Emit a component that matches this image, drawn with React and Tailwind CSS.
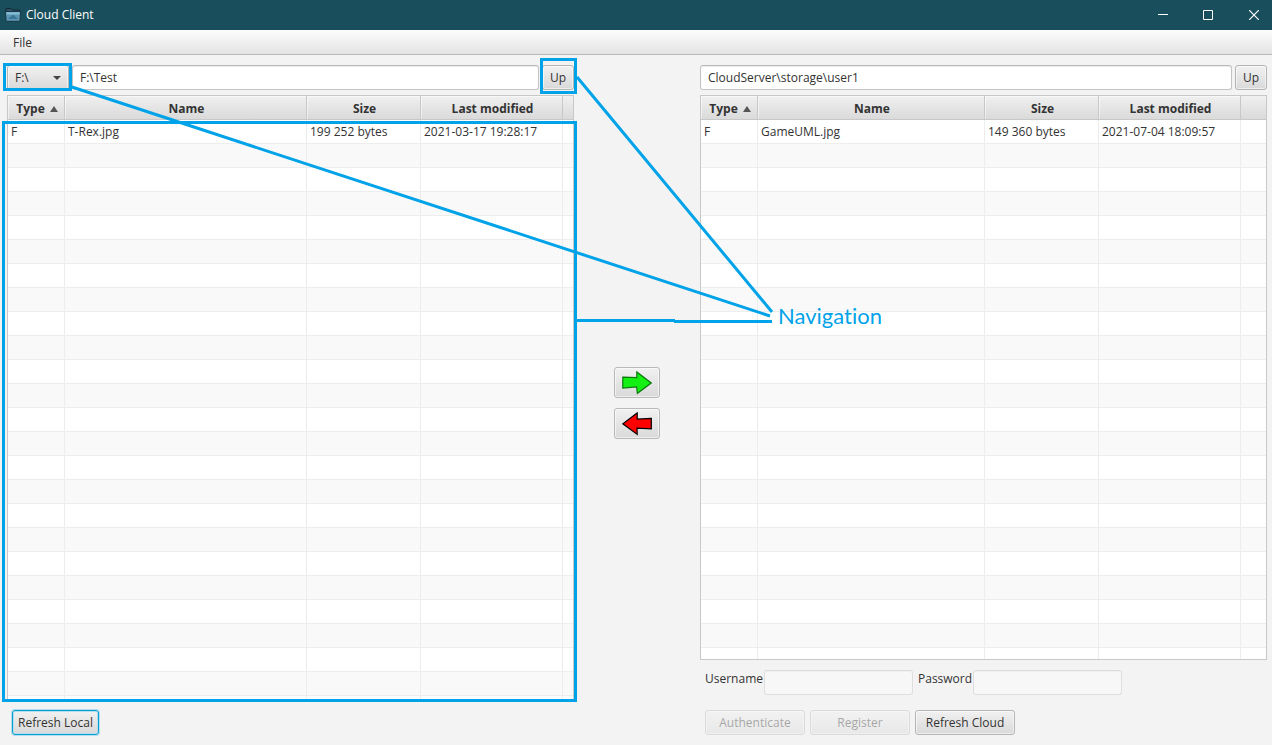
import React from "react";

const buttonBase =
  "h-[25px] shrink-0 rounded-[3px] border bg-linear-to-b from-[#f1f1f1] to-[#d9d9d9] text-center leading-4 shadow-[inset_0_0_0_1px_rgba(255,255,255,0.55)]";
const normalButton = "border-[#b5b5b5] text-[#333333]";
const disabledButton = "border-[#b5b5b5] text-[#333333] opacity-40";
const fieldBase =
  "h-[25px] min-w-0 rounded-[3px] border border-[#c3c3c3] border-t-[#b9b9b9] bg-white px-[7px] leading-4 text-[#333333] shadow-[inset_0_1px_1px_rgba(0,0,0,0.08)] outline-none";

const EMPTY_ROWS = Array.from({ length: 60 }, (_, i) => i);

function FileTable({ label, file, fillerClass }) {
  const head =
    "h-6 border-r border-b border-[#c8c8c8] bg-linear-to-b from-[#f0f0f0] to-[#dadada] pt-[2px] pr-0 pb-0 pl-[2px] text-center font-bold leading-4 shadow-[inset_1px_1px_0_rgba(255,255,255,0.5)]";
  const cell = "h-6 border-r border-b border-[#ededed] py-0 pr-0 pl-[3px] leading-4 whitespace-nowrap";
  return (
    <div className="min-h-0 flex-1 basis-0 overflow-hidden border border-[#c8c8c8] bg-white">
      <table aria-label={label} className="w-full table-fixed border-separate border-spacing-0 text-[#333333]">
        <colgroup>
          <col className="w-[57px]" />
          <col />
          <col className="w-[114px]" />
          <col className="w-[142px]" />
          <col className={fillerClass} />
        </colgroup>
        <thead>
          <tr>
            <th scope="col" className={head}>
              <span className="flex items-center justify-center gap-[5px]">
                Type
                <svg width="8" height="6" viewBox="0 0 8 6" aria-hidden="true">
                  <path d="M4 0 8 6H0Z" fill="#555" />
                </svg>
              </span>
            </th>
            <th scope="col" className={head}>Name</th>
            <th scope="col" className={head}>Size</th>
            <th scope="col" className={head}>Last modified</th>
            <td className="h-6 border-b border-[#c8c8c8] bg-linear-to-b from-[#f0f0f0] to-[#dadada] p-0" />
          </tr>
        </thead>
        <tbody>
          <tr>
            <td className={cell}>{file.type}</td>
            <td className={cell}>{file.name}</td>
            <td className={cell}>{file.size}</td>
            <td className={cell}>{file.modified}</td>
            <td className="h-6 border-b border-[#ededed] p-0" />
          </tr>
          {EMPTY_ROWS.map((i) => (
            <tr key={i} className="odd:bg-white even:bg-[#f9f9f9]">
              <td className={cell} />
              <td className={cell} />
              <td className={cell} />
              <td className={cell} />
              <td className="h-6 border-b border-[#ededed] p-0" />
            </tr>
          ))}
        </tbody>
      </table>
    </div>
  );
}

function TitleBar() {
  return (
    <header className="flex h-[30px] shrink-0 items-center bg-[#194f5c] pl-[5px] text-white">
      <svg width="16" height="14" viewBox="0 0 16 14" aria-hidden="true">
        <path d="M1 1.5Q1 .5 2 .5H6L7.5 2H14Q15 2 15 3V5H1Z" fill="#2b5266" stroke="#122631" />
        <path d="M.5 3.5H15.5L15 12.5Q15 13.3 14 13.3H2Q1 13.3 1 12.5Z" fill="#5c97b4" stroke="#1a3644" />
        <path d="M1.3 4.2H14.7L14.6 6.4H1.4Z" fill="#86bdd6" />
        <path d="M3.5 11Q3.5 9 5.5 9 6 7 8 7 10 7 10.5 9 12.5 9 12.5 11Z" fill="#3c7694" />
      </svg>
      <h1 className="ml-[5px] flex-1 leading-4">Cloud Client</h1>
      <button type="button" aria-label="Minimize" className="flex h-full w-[46px] items-center justify-center">
        <svg width="10" height="10" viewBox="0 0 10 10" aria-hidden="true">
          <path d="M0 4.5H10" stroke="#fff" />
        </svg>
      </button>
      <button type="button" aria-label="Maximize" className="flex h-full w-11 items-center justify-center">
        <svg width="10" height="10" viewBox="0 0 10 10" aria-hidden="true">
          <path d="M.5 .5H9.5V9.5H.5Z" fill="none" stroke="#fff" />
        </svg>
      </button>
      <button type="button" aria-label="Close" className="flex h-full w-[42px] items-center justify-center pl-[6px]">
        <svg width="10" height="10" viewBox="0 0 10 10" className="shrink-0" aria-hidden="true">
          <path d="M0 0 10 10M10 0 0 10" stroke="#fff" strokeWidth="1.2" />
        </svg>
      </button>
    </header>
  );
}

function TransferButtons() {
  const box =
    "flex h-[31px] w-[46px] items-center justify-center rounded-[3px] border border-[#b9b9b9] bg-linear-to-b from-[#f1f1f1] to-[#d9d9d9] shadow-[inset_0_0_0_1px_rgba(255,255,255,0.55)]";
  return (
    <div className="flex flex-col items-center justify-center gap-[10px] pt-[6px]">
      <button type="button" aria-label="Upload to cloud" className={box}>
        <svg width="30" height="24" viewBox="0 0 30 24" aria-hidden="true">
          <path d="M.8 6.2 14.8 6.7 14.8 .9 29.2 12 15.4 22.3 14.6 15.8 .8 17Z" fill="#14f014" stroke="#0a7a0a" strokeWidth="1.2" />
        </svg>
      </button>
      <button type="button" aria-label="Download from cloud" className={box}>
        <svg width="30" height="24" viewBox="0 0 30 24" aria-hidden="true">
          <path d="M29.3 6.4 15.2 7 15.2 .9 .8 11.8 15.2 22.4 15 16.2 29.3 16.8Z" fill="#ff0000" stroke="#000" strokeWidth="1.2" />
        </svg>
      </button>
    </div>
  );
}

function Annotations() {
  return (
    <div className="pointer-events-none absolute inset-0">
      <svg width="900" height="720" viewBox="0 0 900 720" aria-hidden="true" fill="none" stroke="#00a2e8" strokeWidth="3">
        <rect x="4.5" y="64.5" width="66" height="25" />
        <rect x="541.5" y="59.5" width="34" height="33" />
        <rect x="3.5" y="122.5" width="572" height="578" />
        <path d="M72 87 770 316M577 77 772 312M577 320.5H675M674 321.5H772" />
      </svg>
      <span className="absolute top-[302px] left-[778px] font-['Lato',sans-serif] text-[22px] leading-7 text-[#00a2e8] [font-variant-ligatures:none]">
        Navigation
      </span>
    </div>
  );
}

export default function App() {
  return (
    <div className="relative flex h-screen flex-col overflow-hidden bg-[#f3f3f3] font-['Open_Sans',sans-serif] text-[12px] text-[#333333]">
      <TitleBar />
      <nav className="flex h-[25px] shrink-0 items-center border-b border-[#b8b8b8] bg-linear-to-b from-[#fdfdfd] to-[#e3e3e3] px-[13px] pt-[2px]">
        <button type="button" className="leading-4">File</button>
      </nav>

      <main className="grid min-h-0 flex-1 grid-cols-[1fr_126px_1fr] grid-rows-1 pt-[10px] pr-[5px] pb-[10px] pl-[7px]">
        <section className="flex min-h-0 min-w-0 flex-col">
          <div className="mb-[5px] flex gap-[3px]">
            <div className="relative w-[62px] shrink-0">
              <select aria-label="Drive" defaultValue="F" className={`${buttonBase} ${normalButton} w-full appearance-none pl-[7px] text-left`}>
                <option value="F">F:\</option>
              </select>
              <svg width="8" height="4" viewBox="0 0 8 4" className="pointer-events-none absolute top-[11px] right-2" aria-hidden="true">
                <path d="M0 0H8L4 4Z" fill="#444" />
              </svg>
            </div>
            <input type="text" aria-label="Local path" defaultValue="F:\Test" className={`${fieldBase} flex-1`} />
            <button type="button" className={`${buttonBase} ${normalButton} w-8`}>Up</button>
          </div>
          <FileTable
            label="Local files"
            fillerClass="w-[10px]"
            file={{ type: "F", name: "T-Rex.jpg", size: "199 252 bytes", modified: "2021-03-17 19:28:17" }}
          />
          <div className="mt-[10px] flex px-[5px]">
            <button type="button" className="h-[25px] w-[87px] rounded-[3px] border border-[#039ed3] bg-linear-to-b from-[#f1f1f1] to-[#d9d9d9] leading-4 whitespace-nowrap shadow-[0_0_0_1px_#b6deec,inset_0_0_0_1px_#b6deec]">
              Refresh Local
            </button>
          </div>
        </section>

        <TransferButtons />

        <section className="flex min-h-0 min-w-0 flex-col">
          <div className="mb-[5px] flex gap-[3px]">
            <input type="text" aria-label="Cloud path" defaultValue="CloudServer\storage\user1" className={`${fieldBase} flex-1`} />
            <button type="button" className={`${buttonBase} ${normalButton} w-8`}>Up</button>
          </div>
          <FileTable
            label="Cloud files"
            fillerClass="w-[25px]"
            file={{ type: "F", name: "GameUML.jpg", size: "149 360 bytes", modified: "2021-07-04 18:09:57" }}
          />
          <div className="mt-[10px] flex gap-[5px] px-[5px]">
            <label htmlFor="username" className="w-[54px] pt-px leading-4">Username</label>
            <input id="username" type="text" disabled className={`${fieldBase} w-[149px] opacity-40`} />
            <label htmlFor="password" className="w-[50px] pt-px leading-4">Password</label>
            <input id="password" type="password" disabled className={`${fieldBase} w-[149px] opacity-40`} />
          </div>
          <div className="mt-[15px] flex gap-[5px] px-[5px]">
            <button type="button" disabled className={`${buttonBase} ${disabledButton} w-[100px]`}>Authenticate</button>
            <button type="button" disabled className={`${buttonBase} ${disabledButton} w-[100px]`}>Register</button>
            <button type="button" className={`${buttonBase} ${normalButton} w-[100px]`}>Refresh Cloud</button>
          </div>
        </section>
      </main>

      <Annotations />
    </div>
  );
}
